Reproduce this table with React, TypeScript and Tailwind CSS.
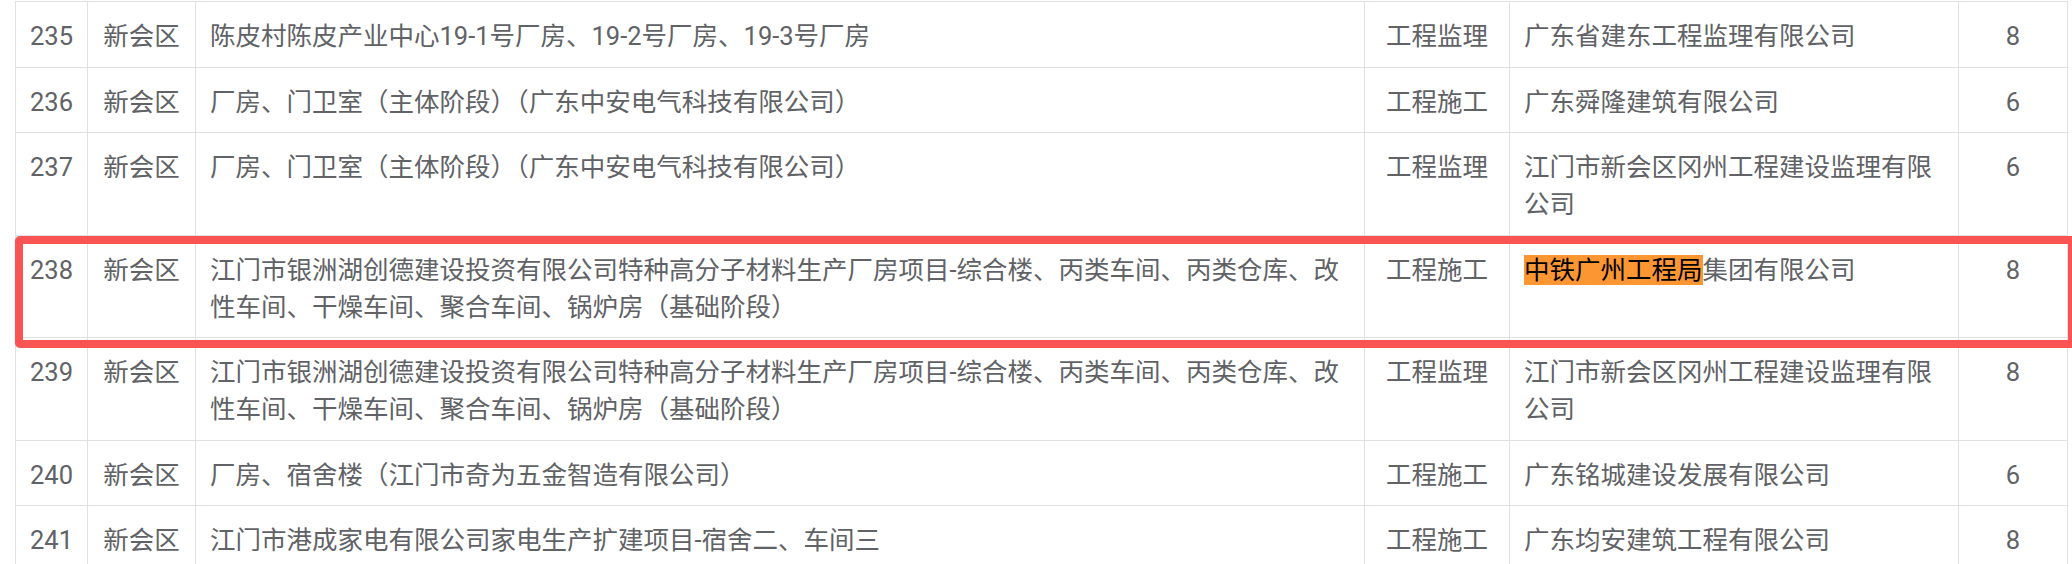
import React from "react";

type Row = {
  no: string;
  area: string;
  name: string;
  type: string;
  company: string;
  mark?: string;
  score: string;
  flagged?: boolean;
};

const LONG_NAME =
  "江门市银洲湖创德建设投资有限公司特种高分子材料生产厂房项目-综合楼、丙类车间、丙类仓库、改性车间、干燥车间、聚合车间、锅炉房（基础阶段）";

const ROWS: Row[] = [
  {
    no: "235",
    area: "新会区",
    name: "陈皮村陈皮产业中心19-1号厂房、19-2号厂房、19-3号厂房",
    type: "工程监理",
    company: "广东省建东工程监理有限公司",
    score: "8",
  },
  {
    no: "236",
    area: "新会区",
    name: "厂房、门卫室（主体阶段）（广东中安电气科技有限公司）",
    type: "工程施工",
    company: "广东舜隆建筑有限公司",
    score: "6",
  },
  {
    no: "237",
    area: "新会区",
    name: "厂房、门卫室（主体阶段）（广东中安电气科技有限公司）",
    type: "工程监理",
    company: "江门市新会区冈州工程建设监理有限公司",
    score: "6",
  },
  {
    no: "238",
    area: "新会区",
    name: LONG_NAME,
    type: "工程施工",
    mark: "中铁广州工程局",
    company: "集团有限公司",
    score: "8",
    flagged: true,
  },
  {
    no: "239",
    area: "新会区",
    name: LONG_NAME,
    type: "工程监理",
    company: "江门市新会区冈州工程建设监理有限公司",
    score: "8",
  },
  {
    no: "240",
    area: "新会区",
    name: "厂房、宿舍楼（江门市奇为五金智造有限公司）",
    type: "工程施工",
    company: "广东铭城建设发展有限公司",
    score: "6",
  },
  {
    no: "241",
    area: "新会区",
    name: "江门市港成家电有限公司家电生产扩建项目-宿舍二、车间三",
    type: "工程施工",
    company: "广东均安建筑工程有限公司",
    score: "8",
  },
];

const cell = "border-r border-[#dfe1e6] pt-[16px] pb-[11.5px]";

const TableRow = ({ row }: { row: Row }) => (
  <div className="relative grid grid-cols-[72px_108px_1169px_145px_449px_109px] border-b border-[#dfe1e6] leading-[37px]">
    <div className={`${cell} text-center`}>{row.no}</div>
    <div className={`${cell} text-center`}>{row.area}</div>
    <div className={`${cell} px-[14px]`}>{row.name}</div>
    <div className={`${cell} text-center`}>{row.type}</div>
    <div className={`${cell} px-[14px]`}>
      {row.mark && <span className="bg-[#fc9632] text-black">{row.mark}</span>}
      {row.company}
    </div>
    <div className={`${cell} text-center`}>{row.score}</div>

    {/* annotation box drawn over the row */}
    {row.flagged && (
      <div className="pointer-events-none absolute left-[-1px] top-0 z-10 h-[112px] w-[2061px] rounded-[5px] border-[8px] border-[#f95353]" />
    )}
  </div>
);

export default function App() {
  return (
    <div className="h-[564px] w-full overflow-hidden bg-white pt-px">
      <div className="ml-[15px] w-[2053px] border-l border-t border-[#dfe1e6] font-['Roboto','Noto_Sans_CJK_SC',sans-serif] text-[25.5px] text-[#606266]">
        {ROWS.map((row) => (
          <TableRow key={row.no} row={row} />
        ))}
      </div>
    </div>
  );
}
